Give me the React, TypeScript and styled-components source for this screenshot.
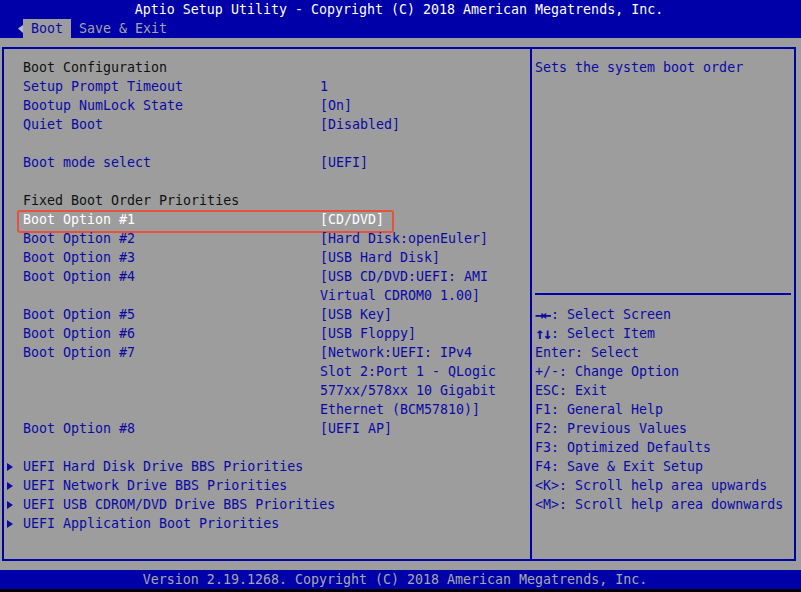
import styled, { createGlobalStyle } from "styled-components";

const BLUE = "#0000a8";
const GRAY = "#9d9d9d";
const INK = "#0a0aa6";

const Global = createGlobalStyle`
  html, body {
    margin: 0;
    padding: 0;
    background: #000;
  }
  * {
    box-sizing: border-box;
  }
`;

const Screen = styled.div`
  width: 801px;
  height: 592px;
  display: flex;
  flex-direction: column;
  background: ${GRAY};
  font-family: "DejaVu Sans Mono", "Liberation Mono", monospace;
  font-size: 13.3px;
  line-height: 19px;
  overflow: hidden;
`;

const TopBar = styled.header`
  background: ${BLUE};
  height: 38px;
  display: flex;
  flex-direction: column;
`;

const Title = styled.div`
  height: 19px;
  color: #ffffff;
  text-align: center;
  padding-right: 3px;
  white-space: pre;
`;

const Tabs = styled.div`
  height: 19px;
  display: flex;
  align-items: stretch;
  padding-left: 14px;
`;

const TabArrow = styled.svg`
  width: 9px;
  height: 19px;
`;

const Tab = styled.div<{ $active?: boolean }>`
  padding: 0 8px;
  white-space: pre;
  background: ${(p) => (p.$active ? GRAY : "transparent")};
  color: ${(p) => (p.$active ? INK : "#a4a4a4")};
`;

const Body = styled.main`
  flex: 1;
  padding: 9px 5px 9px 2px;
`;

const Frame = styled.div`
  height: 100%;
  display: grid;
  grid-template-columns: 528px 1fr;
  border: 2px solid ${BLUE};
`;

const LeftPanel = styled.section`
  border-right: 2px solid ${BLUE};
  padding: 9px 0 0 3px;
`;

const RightPanel = styled.section`
  padding: 9px 3px 0;
`;

const Row = styled.div<{ $selected?: boolean }>`
  position: relative;
  display: grid;
  grid-template-columns: 16px 297px 1fr;
  min-height: 19px;
  white-space: pre;

  ${(p) =>
    p.$selected &&
    `
    &::after {
      content: "";
      position: absolute;
      left: 10px;
      top: 0;
      width: 373px;
      height: 19px;
      border: 2px solid #e5533f;
      border-radius: 3px;
    }
  `}
`;

const Gutter = styled.div`
  display: flex;
  align-items: center;
`;

const Label = styled.div<{ $tone: "head" | "item" | "sel" }>`
  color: ${(p) =>
    p.$tone === "head" ? "#111111" : p.$tone === "sel" ? "#ffffff" : INK};
`;

const Value = styled.div<{ $sel?: boolean }>`
  color: ${(p) => (p.$sel ? "#ffffff" : INK)};
`;

const Desc = styled.div`
  height: 228px;
  color: ${INK};
`;

const Rule = styled.div`
  height: 2px;
  margin: 7px 0 10px;
  background: ${BLUE};
`;

const Help = styled.div`
  color: ${INK};
  white-space: pre;
`;

const Keys = styled.span`
  display: inline-block;
  width: 16px;
  font-size: 16px;
  font-weight: bold;
  letter-spacing: -2px;
  line-height: 19px;
  vertical-align: top;
  overflow: hidden;
`;

const Footer = styled.footer`
  height: 19px;
  background: ${BLUE};
  color: #a8a8a8;
  text-align: center;
  padding-right: 11px;
  white-space: pre;
`;

const Shadow = styled.div`
  height: 3px;
  background: #000;
`;

type Entry =
  | { kind: "blank" }
  | { kind: "head"; label: string }
  | { kind: "item"; label: string; value: string[]; selected?: boolean }
  | { kind: "menu"; label: string };

const entries: Entry[] = [
  { kind: "head", label: "Boot Configuration" },
  { kind: "item", label: "Setup Prompt Timeout", value: ["1"] },
  { kind: "item", label: "Bootup NumLock State", value: ["[On]"] },
  { kind: "item", label: "Quiet Boot", value: ["[Disabled]"] },
  { kind: "blank" },
  { kind: "item", label: "Boot mode select", value: ["[UEFI]"] },
  { kind: "blank" },
  { kind: "head", label: "Fixed Boot Order Priorities" },
  { kind: "item", label: "Boot Option #1", value: ["[CD/DVD]"], selected: true },
  { kind: "item", label: "Boot Option #2", value: ["[Hard Disk:openEuler]"] },
  { kind: "item", label: "Boot Option #3", value: ["[USB Hard Disk]"] },
  {
    kind: "item",
    label: "Boot Option #4",
    value: ["[USB CD/DVD:UEFI: AMI", "Virtual CDROM0 1.00]"],
  },
  { kind: "item", label: "Boot Option #5", value: ["[USB Key]"] },
  { kind: "item", label: "Boot Option #6", value: ["[USB Floppy]"] },
  {
    kind: "item",
    label: "Boot Option #7",
    value: [
      "[Network:UEFI: IPv4",
      "Slot 2:Port 1 - QLogic",
      "577xx/578xx 10 Gigabit",
      "Ethernet (BCM57810)]",
    ],
  },
  { kind: "item", label: "Boot Option #8", value: ["[UEFI AP]"] },
  { kind: "blank" },
  { kind: "menu", label: "UEFI Hard Disk Drive BBS Priorities" },
  { kind: "menu", label: "UEFI Network Drive BBS Priorities" },
  { kind: "menu", label: "UEFI USB CDROM/DVD Drive BBS Priorities" },
  { kind: "menu", label: "UEFI Application Boot Priorities" },
];

// [key, text] — arrow keys get the heavier BIOS glyph look
const helpLines: [string, string][] = [
  ["\u2192\u2190", ": Select Screen"],
  ["\u2191\u2193", ": Select Item"],
  ["", "Enter: Select"],
  ["", "+/-: Change Option"],
  ["", "ESC: Exit"],
  ["", "F1: General Help"],
  ["", "F2: Previous Values"],
  ["", "F3: Optimized Defaults"],
  ["", "F4: Save & Exit Setup"],
  ["", "<K>: Scroll help area upwards"],
  ["", "<M>: Scroll help area downwards"],
];

function MenuMark() {
  return (
    <svg width="7" height="8" viewBox="0 0 7 8">
      <polygon points="0,0 6,4 0,8" fill={INK} />
    </svg>
  );
}

function EntryRow({ entry }: { entry: Entry }) {
  if (entry.kind === "blank") return <Row />;
  if (entry.kind === "head")
    return (
      <Row>
        <Gutter />
        <Label $tone="head">{entry.label}</Label>
      </Row>
    );
  if (entry.kind === "menu")
    return (
      <Row>
        <Gutter>
          <MenuMark />
        </Gutter>
        <Label $tone="item">{entry.label}</Label>
      </Row>
    );
  return (
    <Row $selected={entry.selected}>
      <Gutter />
      <Label $tone={entry.selected ? "sel" : "item"}>{entry.label}</Label>
      <Value $sel={entry.selected}>
        {entry.value.map((v) => (
          <div key={v}>{v}</div>
        ))}
      </Value>
    </Row>
  );
}

export default function App() {
  return (
    <>
      <Global />
      <Screen>
        <TopBar>
          <Title>Aptio Setup Utility - Copyright (C) 2018 American Megatrends, Inc.</Title>
          <Tabs>
            <TabArrow viewBox="0 0 9 19">
              <polygon points="4,9.5 9,6 9,14" fill="#b8b8cc" />
            </TabArrow>
            <Tab $active>Boot</Tab>
            <Tab>Save & Exit</Tab>
          </Tabs>
        </TopBar>

        <Body>
          <Frame>
            <LeftPanel>
              {entries.map((e, i) => (
                <EntryRow key={i} entry={e} />
              ))}
            </LeftPanel>
            <RightPanel>
              <Desc>Sets the system boot order</Desc>
              <Rule />
              {helpLines.map(([k, t]) => (
                <Help key={k + t}>
                  {k && <Keys>{k}</Keys>}
                  {t}
                </Help>
              ))}
            </RightPanel>
          </Frame>
        </Body>

        <Footer>Version 2.19.1268. Copyright (C) 2018 American Megatrends, Inc.</Footer>
        <Shadow />
      </Screen>
    </>
  );
}
